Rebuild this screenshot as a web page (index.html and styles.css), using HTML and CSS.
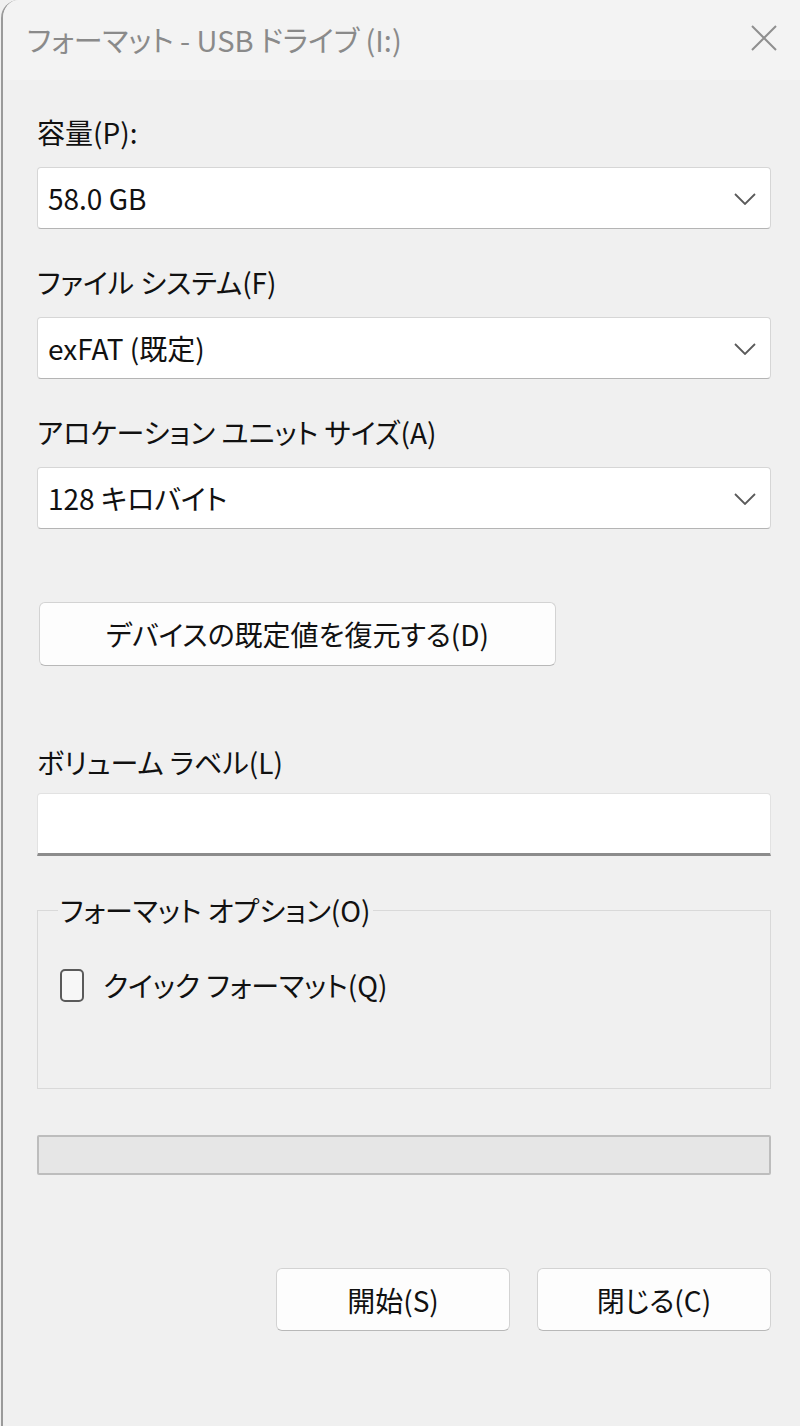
FILE: index.html
```html
<!DOCTYPE html>
<html lang="ja">
<head>
<meta charset="utf-8">
<title>フォーマット - USB ドライブ (I:)</title>
<link rel="stylesheet" href="styles.css">
</head>
<body>
<div class="window">
  <div class="titlebar">
    <span class="title">フォーマット - USB ドライブ (I:)</span>
    <svg class="close" width="28" height="26" viewBox="0 0 28 26"><path d="M2 1 L26 25 M26 1 L2 25" stroke="#8f8f8f" stroke-width="2" fill="none"/></svg>
  </div>
  <div class="content">
    <div class="label">容量(P):</div>
    <div class="combo"><span>58.0 GB</span><svg class="chev" width="22" height="12" viewBox="0 0 22 12"><path d="M1 1 L11 11 L21 1" stroke="#5a5a5a" stroke-width="1.8" fill="none"/></svg></div>
    <div class="label">ファイル システム(F)</div>
    <div class="combo"><span>exFAT (既定)</span><svg class="chev" width="22" height="12" viewBox="0 0 22 12"><path d="M1 1 L11 11 L21 1" stroke="#5a5a5a" stroke-width="1.8" fill="none"/></svg></div>
    <div class="label">アロケーション ユニット サイズ(A)</div>
    <div class="combo"><span>128 キロバイト</span><svg class="chev" width="22" height="12" viewBox="0 0 22 12"><path d="M1 1 L11 11 L21 1" stroke="#5a5a5a" stroke-width="1.8" fill="none"/></svg></div>
    <div class="btn restore">デバイスの既定値を復元する(D)</div>
    <div class="label vol">ボリューム ラベル(L)</div>
    <div class="textbox"></div>
    <fieldset class="group">
      <legend>フォーマット オプション(O)</legend>
      <div class="check-row"><span class="checkbox"></span><span>クイック フォーマット(Q)</span></div>
    </fieldset>
    <div class="progress"></div>
    <div class="actions">
      <div class="btn action">開始(S)</div>
      <div class="btn action">閉じる(C)</div>
    </div>
  </div>
</div>
</body>
</html>
```

FILE: styles.css
```css
html, body {
  margin: 0;
  padding: 0;
  background: #f0f0f0;
}
body {
  font-family: "Noto Sans CJK JP", "Noto Sans", sans-serif;
  font-size: 28px;
  color: #111;
  font-feature-settings: "palt";
}
.window {
  margin-left: 1px;
  border-left: 2px solid #9a9a9a;
  border-top-left-radius: 18px;
  height: 1426px;
  box-sizing: border-box;
  overflow: hidden;
}
.titlebar {
  height: 80px;
  background: #f3f3f3;
  display: flex;
  align-items: center;
  justify-content: space-between;
  padding: 0 22px 0 24px;
}
.title {
  font-size: 29px;
  color: #8a8a8a;
  line-height: 36px;
  margin-top: -2px;
}
.close {
  margin-top: -4px;
}
.content {
  padding: 34px 29px 0 34px;
  display: flex;
  flex-direction: column;
}
.label {
  line-height: 36px;
  height: 36px;
  margin-bottom: 17px;
}
.combo {
  height: 62px;
  box-sizing: border-box;
  background: #fff;
  border: 1px solid #d6d6d6;
  border-bottom-color: #b4b4b4;
  border-radius: 4px;
  display: flex;
  align-items: center;
  justify-content: space-between;
  padding: 0 14px 0 10px;
  margin-bottom: 35px;
}
.combo span {
  line-height: 36px;
}
.chev {
  margin-top: 2px;
}
.btn {
  background: #fdfdfd;
  border: 1px solid #d3d3d3;
  border-bottom-color: #b8b8b8;
  border-radius: 6px;
  box-sizing: border-box;
  display: flex;
  align-items: center;
  justify-content: center;
  line-height: 36px;
}
.restore {
  width: 517px;
  height: 64px;
  margin: 38px 0 0 2px;
}
.label.vol {
  margin-top: 78px;
  margin-bottom: 13px;
}
.textbox {
  height: 63px;
  box-sizing: border-box;
  background: #fff;
  border: 1px solid #e2e2e2;
  border-bottom: 3px solid #8c8c8c;
  border-radius: 4px 4px 0 0;
}
.group {
  margin: 36px 0 0;
  padding: 0 20px 85px;
  border: 1px solid #d9d9d9;
  min-width: 0;
}
.group legend {
  padding: 0 2px;
  line-height: 36px;
}
.check-row {
  margin-top: 39px;
  margin-left: 2px;
  display: flex;
  align-items: center;
  gap: 19px;
  line-height: 36px;
}
.checkbox {
  width: 24px;
  height: 33px;
  box-sizing: border-box;
  border: 2px solid #5a5a5a;
  border-radius: 5px;
  background: #f7f7f7;
}
.progress {
  margin-top: 46px;
  height: 40px;
  box-sizing: border-box;
  background: #e6e6e6;
  border: 2px solid #bdbdbd;
  border-radius: 2px;
}
.actions {
  margin-top: 93px;
  display: flex;
  justify-content: flex-end;
  gap: 27px;
}
.action {
  width: 234px;
  height: 63px;
}
```
